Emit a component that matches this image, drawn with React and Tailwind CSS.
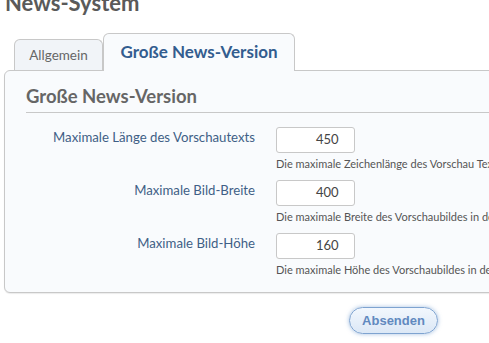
import React from 'react';

const rows = [
  { label: 'Maximale Länge des Vorschautexts', value: '450', desc: 'Die maximale Zeichenlänge des Vorschau Textes in der Übersicht' },
  { label: 'Maximale Bild-Breite', value: '400', desc: 'Die maximale Breite des Vorschaubildes in der Übersicht' },
  { label: 'Maximale Bild-Höhe', value: '160', desc: 'Die maximale Höhe des Vorschaubildes in der Übersicht' },
];

const App = () => {
  return (
    <div className="w-[489px] h-[343px] overflow-hidden bg-white font-['Lato',sans-serif] relative">
      {/* TITEL */}
      <h1 className="ml-[5px] mt-[-10px] text-[22px] leading-[26px] font-bold text-[#5a5a5a]">News-System</h1>

      {/* TABS */}
      <div className="mt-[17px] ml-[14px] flex items-end h-[37px] relative z-10">
        <div className="w-[89px] h-[31px] border border-b-0 border-[#c8c8c8] rounded-t-[6px] bg-[#f1f4f8] flex items-center justify-center text-[13.5px] text-[#666]">
          Allgemein
        </div>
        <div className="w-[192px] h-[38px] mb-[-1px] border border-b-0 border-[#c8c8c8] rounded-t-[6px] bg-[#f9fbfd] flex items-center justify-center text-[17px] font-bold text-[#335d8f] pb-[2px]">
          Große News-Version
        </div>
      </div>

      {/* PANEL */}
      <div className="ml-[4px] w-[530px] h-[223px] border border-[#c8c8c8] rounded-[6px] bg-[#f9fbfd] shadow-[0_1px_1px_rgba(0,0,0,0.08)] pl-[21px] pt-[13px]">
        <h2 className="text-[18.5px] leading-[24px] font-bold text-[#666] pb-[4px] border-b border-[#c8c8c8]">Große News-Version</h2>
        <div className="mt-[14px] flex flex-col gap-[1px]">
          {rows.map(r => (
            <div key={r.value} className="flex h-[52px]">
              <div className="w-[229px] shrink-0 text-right text-[13.2px] text-[#3f5f86] pt-[1px] whitespace-nowrap">{r.label}</div>
              <div className="ml-[21px] shrink-0">
                <div className="w-[79px] h-[26px] bg-white border border-[#c8c8c8] rounded-[3px] text-[13px] text-[#444] flex items-center pl-[39px]">
                  {r.value}
                </div>
                <div className="mt-[3px] text-[11px] text-[#555] whitespace-nowrap">{r.desc}</div>
              </div>
            </div>
          ))}
        </div>
      </div>

      {/* BUTTON */}
      <div className="mt-[14px] ml-[349px]">
        <button className="w-[89px] h-[27px] rounded-full border border-[#7ea3d0] bg-gradient-to-b from-[#f2f7fd] to-[#dce8f6] shadow-[0_0_4px_rgba(90,140,200,0.55)] font-['Liberation_Sans',sans-serif] font-bold text-[13px] text-[#6189bf]">
          Absenden
        </button>
      </div>
    </div>
  );
};

export default App;
